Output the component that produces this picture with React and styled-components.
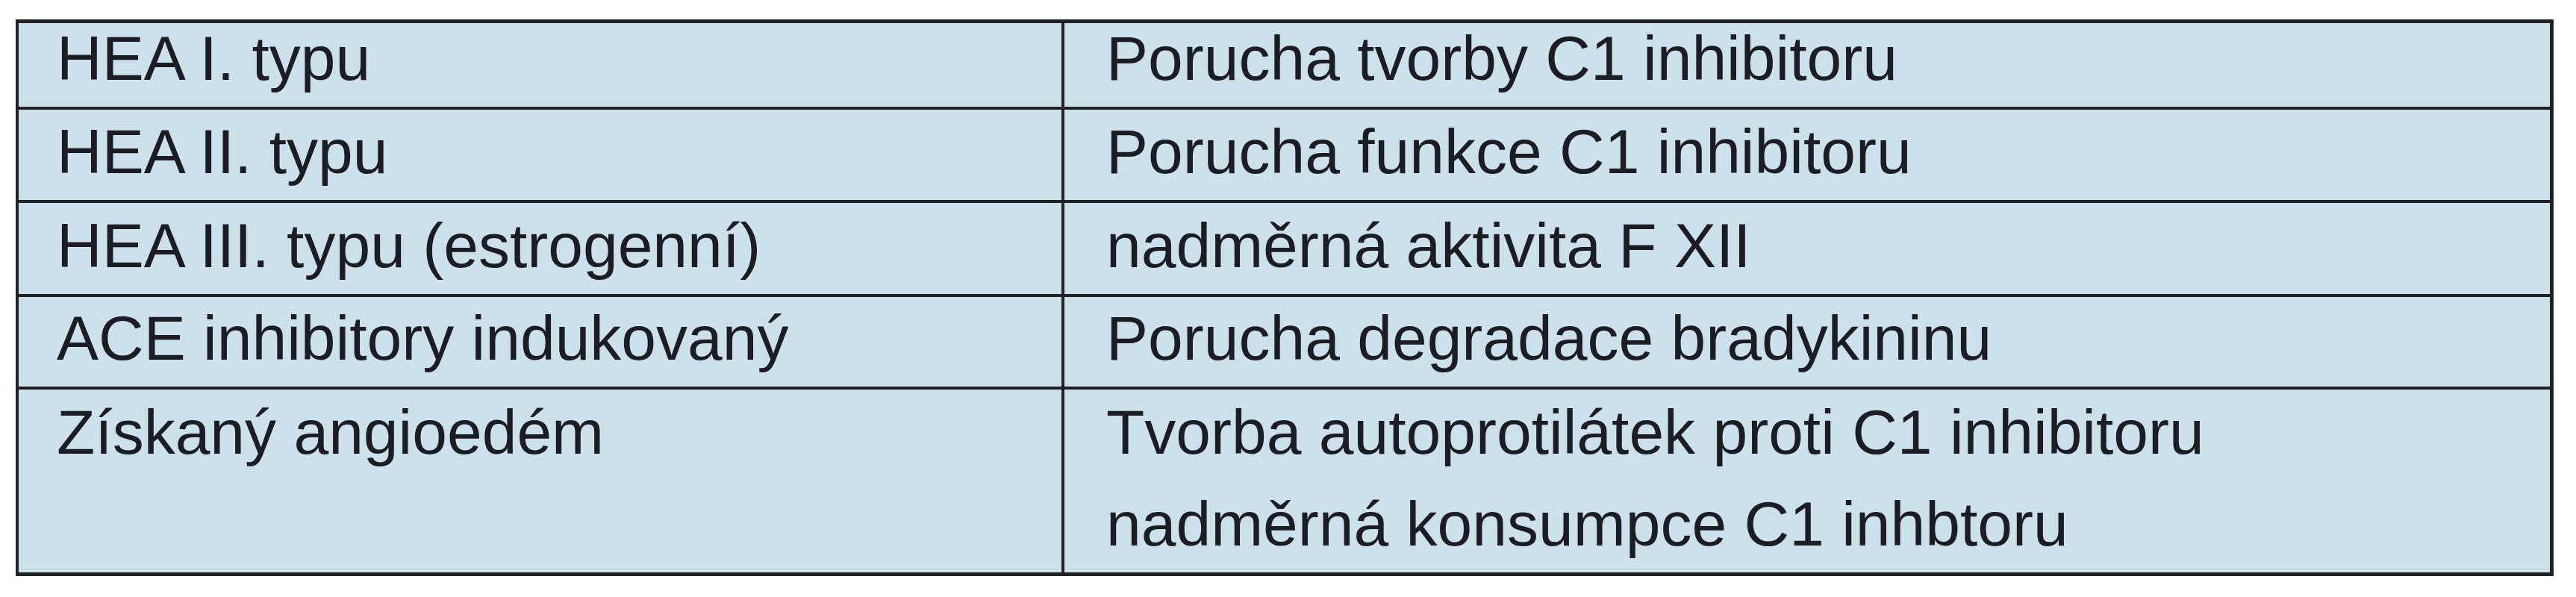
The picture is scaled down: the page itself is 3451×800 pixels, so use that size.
import React from 'react'
import styled, { createGlobalStyle } from 'styled-components'

const GlobalStyle = createGlobalStyle`
  html, body {
    margin: 0;
    padding: 0;
    background: #ffffff;
  }
  body {
    font-family: "Liberation Sans", Arial, sans-serif;
  }
`

const Page = styled.div`
  padding: 26px 30px 0 21px;
`

const Table = styled.div`
  position: relative;
  display: grid;
  grid-template-columns: 1397px 1990px;
  grid-template-rows: 112px 121px 122px 120px 245px;
  gap: 4px;
  width: max-content;
  padding: 5px 5px 5px 4px;
  background: #222226;

  /* the column rule pokes out a little below the bottom border */
  &::after {
    content: '';
    position: absolute;
    left: 1401px;
    top: 100%;
    width: 4px;
    height: 5px;
    background: #222226;
  }
`

const Cell = styled.div`
  display: flex;
  flex-direction: column;
  justify-content: flex-end;
  background: #cde1ea;
  padding: 0 20px 3px ${p => (p.right ? '56px' : '51px')};
  color: #1c1c24;
  font-size: 84px;
  line-height: 123px;
  white-space: nowrap;
`

const Line = styled.div``

const rows = [
  ['HEA I. typu', ['Porucha tvorby C1 inhibitoru']],
  ['HEA II. typu', ['Porucha funkce C1 inhibitoru']],
  ['HEA III. typu (estrogenní)', ['nadměrná aktivita F XII']],
  ['ACE inhibitory indukovaný', ['Porucha degradace bradykininu']],
  ['Získaný angioedém', ['Tvorba autoprotilátek proti C1 inhibitoru', 'nadměrná konsumpce C1 inhbtoru']],
]

export default function App() {
  return (
    <>
      <GlobalStyle />
      <Page>
        <Table>
          {rows.map(([type, causes]) => (
            <React.Fragment key={type}>
              <Cell>
                <Line>{type}</Line>
                {causes.length > 1 && <Line>&nbsp;</Line>}
              </Cell>
              <Cell right>
                {causes.map(c => <Line key={c}>{c}</Line>)}
              </Cell>
            </React.Fragment>
          ))}
        </Table>
      </Page>
    </>
  )
}
